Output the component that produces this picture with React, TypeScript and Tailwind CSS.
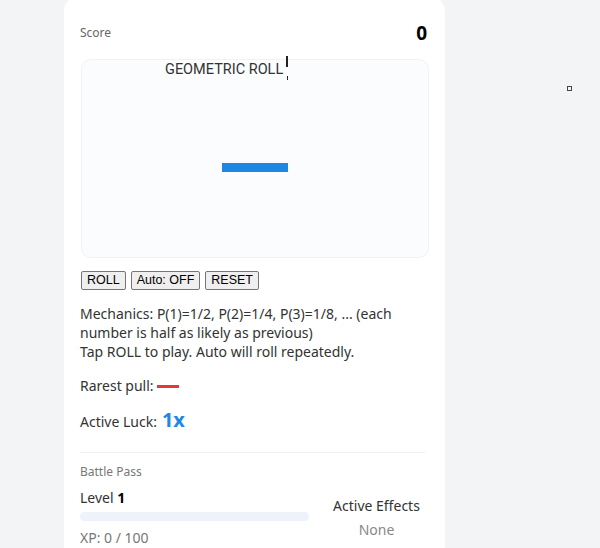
import React from "react";

const sans = { fontFamily: '"Segoe UI", "Noto Sans", sans-serif' };

function RollCanvas() {
  return (
    <div className="flex h-[199px] flex-col rounded-[10px] border border-[#f0f2f5] bg-[#fafcfe]">
      <div
        className="mt-[2px] flex h-[16px] items-start pl-[83px] text-[14.5px] leading-[16px] text-[#333]"
        style={{ fontFamily: 'Roboto, "Noto Sans", sans-serif' }}
      >
        <span>GEOMETRIC ROLL</span>
        <span className="-mt-[6px] ml-[3px] flex flex-col items-center">
          <span className="block h-[11px] w-[2px] bg-[#222]" />
          <span className="mt-[9px] block h-[4px] w-[1px] bg-[#222]" />
        </span>
      </div>
      <div className="mt-[85px] flex justify-center">
        <div className="h-[9px] w-[66px] bg-[#1e87e4]" />
      </div>
    </div>
  );
}

function Btn({ children }: { children: React.ReactNode }) {
  return (
    <button
      className="h-[19px] rounded-[2px] border border-[#767676] bg-[#efefef] px-[5px] text-[12.5px] leading-none text-black"
      style={{ fontFamily: '"Liberation Sans", Arial, sans-serif' }}
    >
      {children}
    </button>
  );
}

export default function App() {
  return (
    <div className="flex min-h-[548px] bg-[#f3f4f6] pl-16" style={sans}>
      <div className="-mt-[3px] w-[381px] rounded-t-[14px] bg-white px-4 pt-[22px] text-[#333]">
        <div className="flex items-center justify-between pr-[2px]">
          <span className="text-[12px] text-[#666]">Score</span>
          <span className="text-[19px] font-bold text-black">0</span>
        </div>
        <div className="mt-[11px] pl-[1px]">
          <RollCanvas />
        </div>
        <div className="mt-[13px] flex gap-[5px] pl-[1px]">
          <Btn>ROLL</Btn>
          <Btn>Auto: OFF</Btn>
          <Btn>RESET</Btn>
        </div>
        <div className="mt-[14px] text-[14px] leading-[19px] text-[#333]">
          <div>Mechanics: P(1)=1/2, P(2)=1/4, P(3)=1/8, ... (each number is half as likely as previous)</div>
          <div>Tap ROLL to play. Auto will roll repeatedly.</div>
        </div>
        <div className="mt-[15px] flex items-center text-[14px] leading-[20px]">
          <span>Rarest pull:</span>
          <span className="ml-[3px] mt-[1px] inline-block h-[3px] w-[22px] bg-[#e53935]" />
        </div>
        <div className="mt-[12px] flex items-baseline text-[14px] leading-[24px]">
          <span>Active Luck:</span>
          <span className="ml-[5px] text-[20px] font-bold text-[#1e88e5]">1x</span>
        </div>
        <div className="mt-[18px] mr-[4px] h-px bg-[#f1f2f4]" />
        <div className="mt-[10px] text-[12px] text-[#777]">Battle Pass</div>
        <div className="mt-[7px] flex">
          <div className="w-[229px]">
            <div className="text-[14px] leading-[20px]">
              Level <span className="font-bold text-black">1</span>
            </div>
            <div className="mt-[4px] h-[9px] rounded-full bg-[#eef2fb]" />
            <div className="mt-[6px] text-[14px] text-[#777]">XP: 0 / 100</div>
          </div>
          <div className="ml-[15px] flex flex-1 flex-col items-center pt-[7px]">
            <div className="text-[14px] text-[#333]">Active Effects</div>
            <div className="mt-[3px] text-[14px] text-[#888]">None</div>
          </div>
        </div>
      </div>
      <div className="ml-[122px] mt-[86px]">
        <div className="h-[5px] w-[5px] border border-[#444]" />
      </div>
    </div>
  );
}
